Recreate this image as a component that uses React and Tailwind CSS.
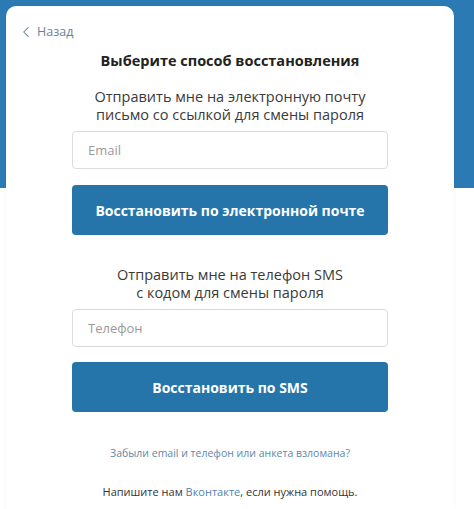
import { ChevronLeft } from "lucide-react"

export default function App() {
  return (
    <div className="w-full min-h-[509px] pt-[6px] px-[6px] bg-[linear-gradient(to_bottom,#2b7ab4_0,#2b7ab4_188px,#ffffff_188px)] font-['Open_Sans','Liberation_Sans',sans-serif]">
      <div className="w-[448px] min-h-[503px] bg-white rounded-t-[10px] shadow-[0_0_2px_rgba(0,0,0,0.08)] flex flex-col">
        <a href="#" className="flex items-center gap-[2px] pl-[11px] pt-[18px] h-[34px] text-[12.5px] text-[#6a8299]">
          <ChevronLeft size={18} strokeWidth={1.4} className="text-[#4f7ea6]" />
          <span>Назад</span>
        </a>

        <h1 className="mt-[11px] text-center text-[14.5px] leading-[20px] font-bold text-[#222]">
          Выберите способ восстановления
        </h1>

        <div className="flex flex-col items-center px-[66px]">
          <p className="mt-[17px] text-center text-[14.5px] leading-[18px] text-[#3a3a3a]">
            Отправить мне на электронную почту
            <br />
            письмо со ссылкой для смены пароля
          </p>
          <input
            placeholder="Email"
            className="mt-[7px] w-[316px] h-[38px] px-[15px] rounded-[4px] border border-[#dcdcdc] text-[13px] placeholder:text-[#9a9a9a] outline-none"
          />
          <button className="mt-[16px] w-[316px] h-[50px] rounded-[4px] bg-[#2575aa] text-white text-[14px] font-bold">
            Восстановить по электронной почте
          </button>

          <p className="mt-[31px] text-center text-[14.5px] leading-[18px] text-[#3a3a3a]">
            Отправить мне на телефон SMS
            <br />с кодом для смены пароля
          </p>
          <input
            placeholder="Телефон"
            className="mt-[7px] w-[316px] h-[38px] px-[15px] rounded-[4px] border border-[#dcdcdc] text-[13px] placeholder:text-[#9a9a9a] outline-none"
          />
          <button className="mt-[15px] w-[316px] h-[50px] rounded-[4px] bg-[#2575aa] text-white text-[14px] font-bold">
            Восстановить по SMS
          </button>

          <a href="#" className="mt-[34px] text-[10.5px] leading-[14px] text-[#5f88a8]">
            Забыли email и телефон или анкета взломана?
          </a>
          <p className="mt-[25px] text-[11px] leading-[14px] text-[#333]">
            Напишите нам <a href="#" className="text-[#4f7fae]">Вконтакте</a>, если нужна помощь.
          </p>
        </div>
      </div>
    </div>
  )
}
